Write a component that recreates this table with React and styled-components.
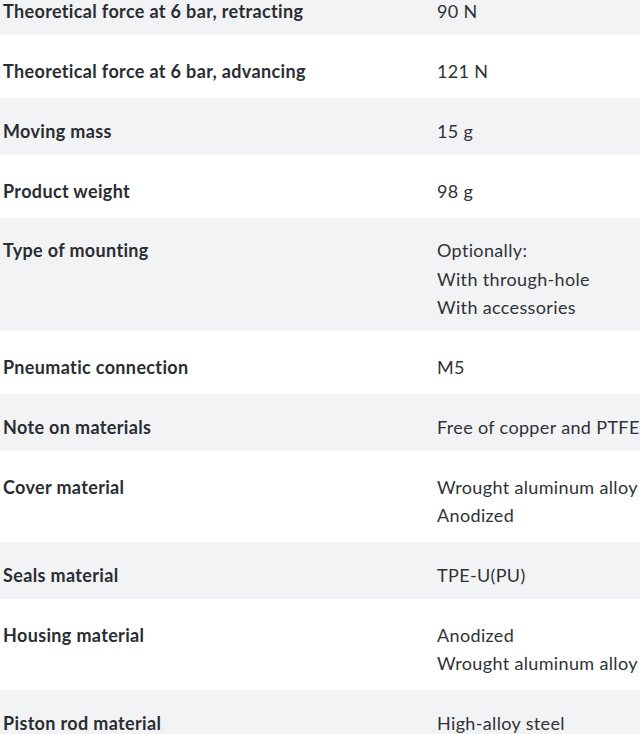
import React from "react";
import styled, { createGlobalStyle } from "styled-components";

const Global = createGlobalStyle`
  html, body { margin: 0; padding: 0; background: #ffffff; }
  body { overflow: hidden; }
`;

const Table = styled.div`
  display: flex;
  flex-direction: column;
  margin-top: -21.5px;
  width: 640px;
  font-family: "Lato", "Liberation Sans", sans-serif;
  font-size: 18px;
  letter-spacing: 0.35px;
  line-height: 28.5px;
  color: #2e3033;
`;

const Row = styled.div`
  display: grid;
  grid-template-columns: 434px 1fr;
  padding: ${(p) => (p.$shaded ? "18.5px 0 9.5px 3px" : "22px 0 12.5px 3px")};
  background: ${(p) => (p.$shaded ? "#f2f3f5" : "#ffffff")};
`;

const Label = styled.div`
  font-weight: 700;
  color: #2a2d31;
  white-space: nowrap;
`;

const Values = styled.div`
  display: flex;
  flex-direction: column;
  font-weight: 400;
  color: #303235;
  white-space: nowrap;
`;

const rows = [
  ["Theoretical force at 6 bar, retracting", ["90 N"]],
  ["Theoretical force at 6 bar, advancing", ["121 N"]],
  ["Moving mass", ["15 g"]],
  ["Product weight", ["98 g"]],
  ["Type of mounting", ["Optionally:", "With through-hole", "With accessories"]],
  ["Pneumatic connection", ["M5"]],
  ["Note on materials", ["Free of copper and PTFE"]],
  ["Cover material", ["Wrought aluminum alloy", "Anodized"]],
  ["Seals material", ["TPE-U(PU)"]],
  ["Housing material", ["Anodized", "Wrought aluminum alloy"]],
  ["Piston rod material", ["High-alloy steel"]],
];

export default function App() {
  return (
    <>
      <Global />
      <Table>
        {rows.map(([label, values], i) => (
          <Row key={label} $shaded={i % 2 === 0}>
            <Label>{label}</Label>
            <Values>
              {values.map((v) => (
                <span key={v}>{v}</span>
              ))}
            </Values>
          </Row>
        ))}
      </Table>
    </>
  );
}
